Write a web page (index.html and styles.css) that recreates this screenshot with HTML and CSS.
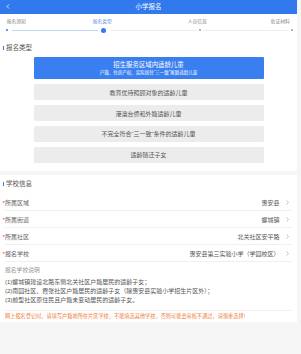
FILE: index.html
```html
<!DOCTYPE html>
<html lang="zh">
<head>
  <meta charset="UTF-8">
  <title>小学报名</title>
  <link rel="stylesheet" href="styles.css">
</head>
<body>
  <div class="page">
    <header class="nav">
      <span class="back">
        <svg width="4" height="5" viewBox="0 0 4 5"><polyline points="3,0.5 1,2.5 3,4.5" fill="none" stroke="#fff" stroke-width="0.8"/></svg>
      </span>
      <h1>小学报名</h1>
    </header>

    <div class="card card-type">
      <div class="steps">
        <div class="step-labels">
          <span>报名须知</span>
          <span class="active">报名类型</span>
          <span>人员信息</span>
          <span>佐证材料</span>
        </div>
        <div class="step-track">
          <i class="dot done"></i>
          <i class="line done"></i>
          <i class="dot current"></i>
          <i class="line"></i>
          <i class="dot"></i>
          <i class="line"></i>
          <i class="dot"></i>
        </div>
      </div>

      <h2 class="section-title">报名类型</h2>
      <div class="type-list">
        <div class="type-btn selected">
          <span class="main">招生服务区域内适龄儿童</span>
          <span class="sub">户籍、住房产权、实际居住“三一致”家庭适龄儿童</span>
        </div>
        <div class="type-btn">教育优待照顾对象的适龄儿童</div>
        <div class="type-btn">港澳台侨和外籍适龄儿童</div>
        <div class="type-btn">不完全符合“三一致”条件的适龄儿童</div>
        <div class="type-btn">适龄随迁子女</div>
      </div>
    </div>

    <div class="card card-school">
      <h2 class="section-title">学校信息</h2>
      <div class="field"><span class="label"><em>*</em>所属区域</span><span class="value">惠安县<i class="arrow"><svg width="3" height="5" viewBox="0 0 3 5"><polyline points="0.5,0.5 2.5,2.5 0.5,4.5" fill="none" stroke="#999" stroke-width="0.6"/></svg></i></span></div>
      <div class="field"><span class="label"><em>*</em>所属街道</span><span class="value">螺城镇<i class="arrow"><svg width="3" height="5" viewBox="0 0 3 5"><polyline points="0.5,0.5 2.5,2.5 0.5,4.5" fill="none" stroke="#999" stroke-width="0.6"/></svg></i></span></div>
      <div class="field"><span class="label"><em>*</em>所属社区</span><span class="value">北关社区安平路<i class="arrow"><svg width="3" height="5" viewBox="0 0 3 5"><polyline points="0.5,0.5 2.5,2.5 0.5,4.5" fill="none" stroke="#999" stroke-width="0.6"/></svg></i></span></div>
      <div class="field"><span class="label"><em>*</em>报名学校</span><span class="value">惠安县第三实验小学（学园校区）<i class="arrow"><svg width="3" height="5" viewBox="0 0 3 5"><polyline points="0.5,0.5 2.5,2.5 0.5,4.5" fill="none" stroke="#999" stroke-width="0.6"/></svg></i></span></div>

      <div class="note">
        <p class="note-title">报名学校说明</p>
        <p>(1)螺城镇建设北路东侧北关社区户籍居民的适龄子女；</p>
        <p>(2)南园社区、霞张社区户籍居民的适龄子女（除惠安县实验小学招生片区外）；</p>
        <p>(3)前型社区原住民且户籍未变动居民的适龄子女。</p>
      </div>
      <p class="warn">网上报名登记时，请填写户籍地所在片区学校，不能填选其他学校，否则可能会审核不通过，请慎重选择!</p>
    </div>
  </div>
</body>
</html>
```

FILE: styles.css
```css
* { margin: 0; padding: 0; box-sizing: border-box; }
body {
  background-color: #f5f5f5;
  font-family: "Liberation Sans", "Noto Sans CJK SC", sans-serif;
  color: #555;
}
.page {
  width: 297px;
}
.nav {
  height: 14px;
  background-color: #3279ee;
  position: relative;
  text-align: center;
}
.nav h1 {
  font-size: 6.5px;
  font-weight: normal;
  line-height: 14px;
  color: #fff;
}
.back {
  position: absolute;
  left: 6px;
  top: 4px;
  display: flex;
}
.card {
  background-color: #fff;
}
.card-type {
  padding-bottom: 7.6px;
}
.steps {
  padding-top: 4px;
}
.step-labels {
  display: grid;
  grid-template-columns: 86px 95px 83px auto;
  padding-left: 6.7px;
  font-size: 4.8px;
  line-height: 8px;
  color: #888;
}
.step-labels .active {
  color: #5d90ee;
}
.step-track {
  display: flex;
  align-items: center;
  height: 5px;
  margin-top: 1.5px;
  padding-left: 6px;
}
.step-track i {
  display: block;
}
.dot {
  width: 2px;
  height: 2px;
  border-radius: 50%;
  background-color: #999;
}
.dot.done {
  background-color: #3279ee;
}
.dot.current {
  width: 5px;
  height: 5px;
  background-color: #3279ee;
  margin: 0 3px;
}
.line {
  width: 86px;
  height: 1px;
  background-color: #eeeeee;
  margin: 0 2px;
}
.line.done {
  background-color: #c3d7f8;
  margin: 0 0 0 4px;
}
.section-title {
  display: flex;
  align-items: center;
  font-size: 6.5px;
  font-weight: normal;
  line-height: 13px;
  color: #555;
  padding-left: 2.7px;
}
.section-title::before {
  content: "";
  width: 1.3px;
  height: 4px;
  background-color: #3279ee;
  margin-right: 2px;
}
.card-type .section-title {
  margin-top: 8.7px;
}
.type-list {
  display: flex;
  flex-direction: column;
  gap: 4.4px;
  width: 230px;
  margin: 2.8px auto 0;
}
.type-btn {
  height: 16.5px;
  background-color: #ececec;
  border-radius: 1px;
  font-size: 6px;
  display: flex;
  align-items: center;
  justify-content: center;
  color: #555;
}
.type-btn.selected {
  height: 22.5px;
  background-color: #3a7ff0;
  color: #fff;
  flex-direction: column;
}
.type-btn .main {
  font-size: 6.4px;
  line-height: 9px;
}
.type-btn .sub {
  font-size: 4.5px;
  line-height: 8px;
}
.card-school {
  margin-top: 4.3px;
  padding: 2.5px 5px 0;
}
.card-school .section-title {
  margin-left: -5px;
  margin-bottom: 3.8px;
}
.field {
  height: 17px;
  display: flex;
  align-items: center;
  justify-content: space-between;
  border-bottom: 1px solid #f0f0f0;
  font-size: 6px;
}
.field .label {
  color: #666;
  margin-left: -2.5px;
}
.field em {
  font-style: normal;
  color: #ee4444;
  display: inline-block;
  width: 2.5px;
}
.field .value {
  display: flex;
  align-items: center;
  color: #555;
}
.arrow {
  display: flex;
  margin-left: 6px;
  margin-right: 3.5px;
}
.note {
  padding: 3.9px 0 4.8px;
  border-bottom: 1px solid #f0f0f0;
  font-size: 6px;
  line-height: 9px;
  color: #555;
}
.note-title {
  color: #999;
  font-size: 5.8px;
  margin-bottom: 2.6px;
}
.warn {
  font-size: 5.2px;
  line-height: 9px;
  padding: 1.6px 0 0.4px;
  color: #f07c3c;
}
```
